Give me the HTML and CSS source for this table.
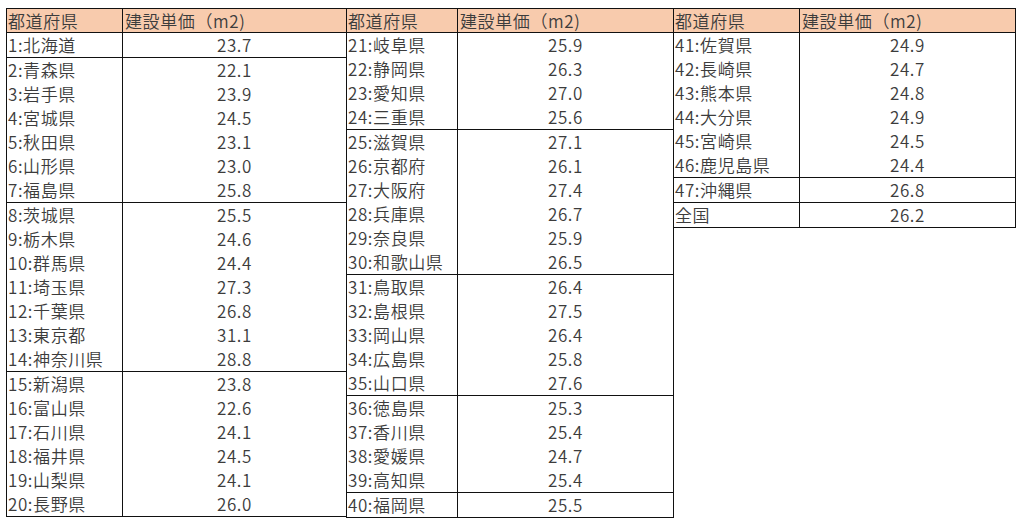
FILE: index.html
```html
<!DOCTYPE html>
<html lang="ja">
<head>
<meta charset="utf-8">
<link rel="stylesheet" href="styles.css">
</head>
<body>
<div class="sheet">
  <div class="tbl t1">
    <div class="row head"><div class="name">都道府県</div><div class="val">建設単価（m2)</div></div>
    <div class="grp">
      <div class="row"><div class="name">1:北海道</div><div class="val num">23.7</div></div>
    </div>
    <div class="grp">
      <div class="row"><div class="name">2:青森県</div><div class="val num">22.1</div></div>
      <div class="row"><div class="name">3:岩手県</div><div class="val num">23.9</div></div>
      <div class="row"><div class="name">4:宮城県</div><div class="val num">24.5</div></div>
      <div class="row"><div class="name">5:秋田県</div><div class="val num">23.1</div></div>
      <div class="row"><div class="name">6:山形県</div><div class="val num">23.0</div></div>
      <div class="row"><div class="name">7:福島県</div><div class="val num">25.8</div></div>
    </div>
    <div class="grp">
      <div class="row"><div class="name">8:茨城県</div><div class="val num">25.5</div></div>
      <div class="row"><div class="name">9:栃木県</div><div class="val num">24.6</div></div>
      <div class="row"><div class="name">10:群馬県</div><div class="val num">24.4</div></div>
      <div class="row"><div class="name">11:埼玉県</div><div class="val num">27.3</div></div>
      <div class="row"><div class="name">12:千葉県</div><div class="val num">26.8</div></div>
      <div class="row"><div class="name">13:東京都</div><div class="val num">31.1</div></div>
      <div class="row"><div class="name">14:神奈川県</div><div class="val num">28.8</div></div>
    </div>
    <div class="grp">
      <div class="row"><div class="name">15:新潟県</div><div class="val num">23.8</div></div>
      <div class="row"><div class="name">16:富山県</div><div class="val num">22.6</div></div>
      <div class="row"><div class="name">17:石川県</div><div class="val num">24.1</div></div>
      <div class="row"><div class="name">18:福井県</div><div class="val num">24.5</div></div>
      <div class="row"><div class="name">19:山梨県</div><div class="val num">24.1</div></div>
      <div class="row"><div class="name">20:長野県</div><div class="val num">26.0</div></div>
    </div>
  </div>

  <div class="tbl t2">
    <div class="row head"><div class="name">都道府県</div><div class="val">建設単価（m2)</div></div>
    <div class="grp">
      <div class="row"><div class="name">21:岐阜県</div><div class="val num">25.9</div></div>
      <div class="row"><div class="name">22:静岡県</div><div class="val num">26.3</div></div>
      <div class="row"><div class="name">23:愛知県</div><div class="val num">27.0</div></div>
      <div class="row"><div class="name">24:三重県</div><div class="val num">25.6</div></div>
    </div>
    <div class="grp">
      <div class="row"><div class="name">25:滋賀県</div><div class="val num">27.1</div></div>
      <div class="row"><div class="name">26:京都府</div><div class="val num">26.1</div></div>
      <div class="row"><div class="name">27:大阪府</div><div class="val num">27.4</div></div>
      <div class="row"><div class="name">28:兵庫県</div><div class="val num">26.7</div></div>
      <div class="row"><div class="name">29:奈良県</div><div class="val num">25.9</div></div>
      <div class="row"><div class="name">30:和歌山県</div><div class="val num">26.5</div></div>
    </div>
    <div class="grp">
      <div class="row"><div class="name">31:鳥取県</div><div class="val num">26.4</div></div>
      <div class="row"><div class="name">32:島根県</div><div class="val num">27.5</div></div>
      <div class="row"><div class="name">33:岡山県</div><div class="val num">26.4</div></div>
      <div class="row"><div class="name">34:広島県</div><div class="val num">25.8</div></div>
      <div class="row"><div class="name">35:山口県</div><div class="val num">27.6</div></div>
    </div>
    <div class="grp">
      <div class="row"><div class="name">36:徳島県</div><div class="val num">25.3</div></div>
      <div class="row"><div class="name">37:香川県</div><div class="val num">25.4</div></div>
      <div class="row"><div class="name">38:愛媛県</div><div class="val num">24.7</div></div>
      <div class="row"><div class="name">39:高知県</div><div class="val num">25.4</div></div>
    </div>
    <div class="grp">
      <div class="row"><div class="name">40:福岡県</div><div class="val num">25.5</div></div>
    </div>
  </div>

  <div class="tbl t3">
    <div class="row head"><div class="name">都道府県</div><div class="val">建設単価（m2)</div></div>
    <div class="grp">
      <div class="row"><div class="name">41:佐賀県</div><div class="val num">24.9</div></div>
      <div class="row"><div class="name">42:長崎県</div><div class="val num">24.7</div></div>
      <div class="row"><div class="name">43:熊本県</div><div class="val num">24.8</div></div>
      <div class="row"><div class="name">44:大分県</div><div class="val num">24.9</div></div>
      <div class="row"><div class="name">45:宮崎県</div><div class="val num">24.5</div></div>
      <div class="row"><div class="name">46:鹿児島県</div><div class="val num">24.4</div></div>
    </div>
    <div class="grp">
      <div class="row"><div class="name">47:沖縄県</div><div class="val num">26.8</div></div>
    </div>
    <div class="grp">
      <div class="row"><div class="name">全国</div><div class="val num">26.2</div></div>
    </div>
  </div>
</div>
</body>
</html>
```
FILE: styles.css
```css
html, body {
  margin: 0;
  padding: 0;
  background: #ffffff;
}

.sheet {
  display: flex;
  align-items: flex-start;
  padding: 8px 0 0 6px;
  font-family: "Noto Sans CJK JP", "Noto Sans", sans-serif;
  font-size: 17px;
  font-weight: 350;
  letter-spacing: 0.6px;
  color: #3c3c3c;
}

.tbl {
  box-sizing: border-box;
  border: 1px solid #111111;
}

.t1 { width: 341px; }
.t2 { width: 328px; margin-left: -1px; }
.t3 { width: 343px; margin-left: -1px; }

.row {
  display: grid;
  height: 24px;
  line-height: 24px;
}

.t1 .row { grid-template-columns: 116px 1fr; }
.t2 .row { grid-template-columns: 111px 1fr; }
.t3 .row { grid-template-columns: 126px 1fr; }

.row.head {
  height: 23px;
  line-height: 23px;
  background: #f8cbad;
}

.grp {
  border-top: 1px solid #111111;
}

.name {
  box-sizing: border-box;
  border-right: 1px solid #111111;
  padding-left: 1px;
  white-space: nowrap;
  overflow: hidden;
}

.val {
  padding-left: 2px;
  white-space: nowrap;
}

.val.num {
  text-align: center;
  padding-left: 0;
}
```
